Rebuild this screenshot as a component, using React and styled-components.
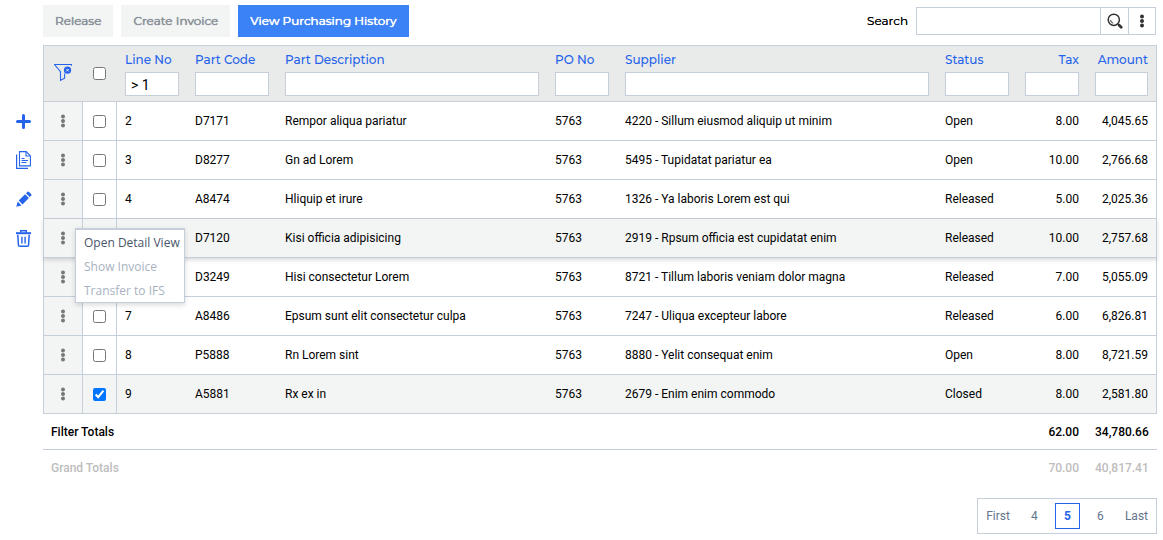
import React, { useState } from "react";
import styled, { createGlobalStyle } from "styled-components";

const line = "#c5cedb";
const blue = "#2563eb";
const shade = "#f3f5f4";
const heading = 'Montserrat, Inter, "Open Sans", sans-serif';

const GlobalStyle = createGlobalStyle`
  *, *::before, *::after { box-sizing: border-box; }
  body {
    margin: 0;
    background: #fff;
    color: #000;
    font-family: Roboto, "Liberation Sans", sans-serif;
    font-size: 12px;
    line-height: 16px;
  }
  button, input { font-family: inherit; }
`;

const Page = styled.main`
  display: grid;
  grid-template-columns: 43px minmax(0, 1fr);
  padding: 5px 6px 5px 0;
`;

const Toolbar = styled.div`
  grid-column: 2;
  display: flex;
  align-items: center;
  justify-content: space-between;
  gap: 24px;
  margin-bottom: 8px;
`;

const ButtonGroup = styled.div`
  display: flex;
  gap: 8px;
`;

const ToolButton = styled.button`
  height: 32px;
  padding: 0 12px;
  border: 0;
  background: ${(p) => (p.$primary ? "#3b82f6" : shade)};
  color: ${(p) => (p.$primary ? "#fff" : "#8b929b")};
  font: 400 12px/16px ${heading};
  text-shadow: 0 0 0 currentColor, 0 0 1px currentColor;
  white-space: nowrap;
`;

const SearchArea = styled.form`
  display: flex;
  align-items: center;
  gap: 8px;
  padding-right: 1px;
`;

const SearchLabel = styled.label`
  font: 400 12px/16px ${heading};
  text-shadow: 0 0 0 currentColor;
`;

const SearchBox = styled.div`
  display: flex;
  height: 28px;
  border: 1px solid ${line};
`;

const SearchInput = styled.input`
  width: 183px;
  padding: 0 8px;
  border: 0;
  background: #fff;
  outline: none;
`;

const SearchButton = styled.button`
  display: grid;
  place-items: center;
  width: 28px;
  padding: 0;
  border: 0;
  border-left: 1px solid ${line};
  background: #fff;
  color: #333;
  &:last-child { width: 27px; }
`;

const Rail = styled.nav`
  display: flex;
  flex-direction: column;
  padding: 57px 0 0 8px;
`;

const RailButton = styled.button`
  display: grid;
  place-items: center;
  width: 31px;
  height: 39px;
  padding: 0;
  border: 0;
  background: none;
  color: ${blue};
`;

const Content = styled.section`
  display: flex;
  flex-direction: column;
`;

const Table = styled.table`
  width: 100%;
  table-layout: fixed;
  border-collapse: separate;
  border-spacing: 0;
`;

const Col = styled.col`
  width: ${(p) => p.$width}px;
`;

const HeadCell = styled.th`
  height: 57px;
  padding: 0 8px;
  border: 0 solid ${line};
  border-width: 1px 0;
  background: #e9ebea;
  color: ${blue};
  text-align: ${(p) => (p.$right ? "right" : "left")};
  font-weight: 400;
  &:first-child { border-left-width: 1px; }
  &:last-child { border-right-width: 1px; }
`;

const ToolHeadCell = styled(HeadCell)`
  padding: 0 1px 0 0;
  text-align: center;
`;

const HeadLabel = styled.label`
  display: block;
  margin-bottom: 4px;
  font: 500 12px/16px ${heading};
  white-space: nowrap;
`;

const FilterInput = styled.input`
  display: block;
  width: 100%;
  height: 24px;
  padding: 2px 5px 0;
  border: 1px solid ${line};
  border-radius: 0;
  background: #fff;
  color: #000;
  font-size: 14px;
  outline: none;
`;

const IconButton = styled.button`
  display: grid;
  place-items: center;
  width: 100%;
  height: 32px;
  padding: 0;
  border: 0;
  background: none;
  color: ${(p) => p.$color};
`;

const Row = styled.tr`
  background: ${(p) => (p.$shaded ? shade : "#fff")};
  ${(p) =>
    p.$raised &&
    `
    position: relative;
    z-index: 1;
    box-shadow: 0 2px 4px rgba(0, 0, 0, 0.15);
  `}
`;

const Cell = styled.td`
  height: 39px;
  padding: 0 8px;
  border: 0 solid ${line};
  border-bottom-width: 1px;
  text-align: ${(p) => (p.$right ? "right" : "left")};
  white-space: nowrap;
  &:last-child { border-right-width: 1px; }
`;

const ActionCell = styled(Cell)`
  position: relative;
  padding: 0;
  border-width: 0 1px 1px;
  background: ${shade};
`;

const CheckCell = styled(Cell)`
  padding: 0;
  border-right-width: 1px;
  text-align: center;
`;

const Checkbox = styled.input`
  display: block;
  width: 13px;
  height: 13px;
  margin: 0 auto;
`;

const Menu = styled.div`
  position: absolute;
  z-index: 2;
  top: 9px;
  left: 31px;
  display: flex;
  flex-direction: column;
  width: 110px;
  border: 1px solid ${line};
  border-top-width: 2px;
  background: #fff;
  box-shadow: 0 2px 5px rgba(0, 0, 0, 0.15);
`;

const MenuItem = styled.button`
  height: 24px;
  padding: 2px 8px 0;
  border: 0;
  background: none;
  color: #475569;
  font: 12px/16px "Open Sans", "Noto Sans", sans-serif;
  text-align: left;
  white-space: nowrap;
  &:disabled { color: #a8b2bf; }
`;

const TotalCell = styled.td`
  height: 36px;
  padding: 0 8px;
  border-bottom: ${(p) => (p.$muted ? "0" : `1px solid ${line}`)};
  color: ${(p) => (p.$muted ? "#bdbdbd" : "#000")};
  font-weight: 500;
  text-align: ${(p) => (p.$right ? "right" : "left")};
  &:last-child { padding-right: 9px; }
`;

const Pager = styled.nav`
  display: flex;
  align-items: center;
  align-self: flex-end;
  gap: 4px;
  height: 36px;
  margin-top: 12px;
  border: 1px solid ${line};
`;

const PageNumbers = styled.div`
  display: flex;
  gap: 8px;
`;

const PageButton = styled.button`
  height: 26px;
  min-width: 25px;
  padding: 0 ${(p) => (p.$wide ? 8 : 0)}px;
  border: ${(p) => (p.$current ? `1px solid ${blue}` : "0")};
  background: none;
  color: ${(p) => (p.$current ? blue : "#64748b")};
  font-size: 12px;
  font-weight: ${(p) => (p.$current ? 700 : 400)};
`;

const Dots = ({ r = 2 }) => (
  <svg width="6" height="14" viewBox="0 0 6 14" fill="currentColor" aria-hidden="true">
    <circle cx="3" cy="2.5" r={r} />
    <circle cx="3" cy="7" r={r} />
    <circle cx="3" cy="11.5" r={r} />
  </svg>
);

const SearchIcon = () => (
  <svg width="16" height="16" viewBox="0 0 16 16" fill="none" stroke="currentColor" aria-hidden="true">
    <circle cx="6.8" cy="6.8" r="5.6" strokeWidth="1.5" />
    <path d="M3.6 7a3.4 3.4 0 0 0 2.6 3.2" strokeWidth="1" />
    <path d="M10.8 10.8l1.4 1.4" strokeWidth="1.4" />
    <path d="M12.2 12.2l2 2" strokeWidth="2.8" strokeLinecap="round" />
  </svg>
);

const FilterClearIcon = () => (
  <svg width="18" height="20" viewBox="0 0 18 20" fill="none" stroke="currentColor" aria-hidden="true">
    <path d="M17.5 1.8V.5H.5L6.5 7.6V16.3L10.6 14.2V9.6" strokeWidth="1.1" />
    <circle cx="13.5" cy="6.2" r="3.6" fill="currentColor" stroke="none" />
    <path d="M12.3 5l2.4 2.4M14.7 5l-2.4 2.4" stroke="#e9ebea" strokeWidth="1" />
  </svg>
);

const PlusIcon = () => (
  <svg width="15" height="15" viewBox="0 0 15 15" fill="none" stroke="currentColor" strokeWidth="3" strokeLinecap="round" aria-hidden="true">
    <path d="M7.5 1.5v12M1.5 7.5h12" />
  </svg>
);

const CopyIcon = () => (
  <svg width="15" height="19" viewBox="0 0 15 19" fill="none" stroke="currentColor" aria-hidden="true">
    <path d="M3.5 .6H10.2L14.4 4.9V14.9H3.5Z" strokeWidth="1.1" />
    <path d="M10 .8V5H14.4" strokeWidth="1.1" />
    <path d="M.6 3.4V17.4H12" strokeWidth="1.2" />
    <path d="M5.5 7.5H8.5M5.5 9.5H12M5.5 11.5H10.5" strokeWidth="1" />
  </svg>
);

const PencilIcon = () => (
  <svg width="16" height="17" viewBox="0 0 16 17" fill="currentColor" aria-hidden="true">
    <path d="M.3 15.8L1.7 10.6L5.5 14.4Z" />
    <path d="M2.7 9.6L9.1 3.2L12.9 7L6.5 13.4Z" />
    <path d="M10 2.3L11.6.7Q12.2.1 12.8.7L15.3 3.2Q15.9 3.8 15.3 4.4L13.8 6.1Z" />
  </svg>
);

const TrashIcon = () => (
  <svg width="15" height="17" viewBox="0 0 15 17" fill="none" stroke="currentColor" aria-hidden="true">
    <path d="M0 3.2H15" strokeWidth="2" />
    <path d="M4.7 2.6V.8H10.3V2.6" strokeWidth="1.4" />
    <path d="M1.8 4.8L2.4 15Q2.5 16.2 3.7 16.2H11.3Q12.5 16.2 12.6 15L13.2 4.8" strokeWidth="1.5" />
    <path d="M5.9 6.8V13.4M9.1 6.8V13.4" strokeWidth="1.4" />
  </svg>
);

const columns = [
  { key: "line", label: "Line No", width: 70 },
  { key: "code", label: "Part Code", width: 90 },
  { key: "description", label: "Part Description", width: 270 },
  { key: "po", label: "PO No", width: 70 },
  { key: "supplier", label: "Supplier", width: 320 },
  { key: "status", label: "Status", width: 80 },
  { key: "tax", label: "Tax", width: 70, right: true },
  { key: "amount", label: "Amount", width: 70, right: true },
];

const rows = [
  ["2", "D7171", "Rempor aliqua pariatur", "5763", "4220 - Sillum eiusmod aliquip ut minim", "Open", "8.00", "4,045.65"],
  ["3", "D8277", "Gn ad Lorem", "5763", "5495 - Tupidatat pariatur ea", "Open", "10.00", "2,766.68"],
  ["4", "A8474", "Hliquip et irure", "5763", "1326 - Ya laboris Lorem est qui", "Released", "5.00", "2,025.36"],
  ["5", "D7120", "Kisi officia adipisicing", "5763", "2919 - Rpsum officia est cupidatat enim", "Released", "10.00", "2,757.68"],
  ["6", "D3249", "Hisi consectetur Lorem", "5763", "8721 - Tillum laboris veniam dolor magna", "Released", "7.00", "5,055.09"],
  ["7", "A8486", "Epsum sunt elit consectetur culpa", "5763", "7247 - Uliqua excepteur labore", "Released", "6.00", "6,826.81"],
  ["8", "P5888", "Rn Lorem sint", "5763", "8880 - Yelit consequat enim", "Open", "8.00", "8,721.59"],
  ["9", "A5881", "Rx ex in", "5763", "2679 - Enim enim commodo", "Closed", "8.00", "2,581.80"],
];

const totals = [
  { label: "Filter Totals", tax: "62.00", amount: "34,780.66" },
  { label: "Grand Totals", tax: "70.00", amount: "40,817.41", muted: true },
];

const railActions = [
  { label: "Add", Icon: PlusIcon },
  { label: "Copy", Icon: CopyIcon },
  { label: "Edit", Icon: PencilIcon },
  { label: "Delete", Icon: TrashIcon },
];

export default function App() {
  const [selected, setSelected] = useState(["9"]);
  const menuRow = "5";

  const toggle = (id) =>
    setSelected((ids) => (ids.includes(id) ? ids.filter((i) => i !== id) : [...ids, id]));

  return (
    <>
      <GlobalStyle />
      <Page>
        <Toolbar>
          <ButtonGroup>
            <ToolButton type="button">Release</ToolButton>
            <ToolButton type="button">Create Invoice</ToolButton>
            <ToolButton type="button" $primary>View Purchasing History</ToolButton>
          </ButtonGroup>
          <SearchArea onSubmit={(e) => e.preventDefault()}>
            <SearchLabel htmlFor="search">Search</SearchLabel>
            <SearchBox>
              <SearchInput id="search" type="text" />
              <SearchButton type="submit" aria-label="Run search"><SearchIcon /></SearchButton>
              <SearchButton type="button" aria-label="Search options"><Dots /></SearchButton>
            </SearchBox>
          </SearchArea>
        </Toolbar>

        <Rail aria-label="Row actions">
          {railActions.map(({ label, Icon }) => (
            <RailButton key={label} type="button" aria-label={label}><Icon /></RailButton>
          ))}
        </Rail>

        <Content>
          <Table>
            <colgroup>
              <Col $width={40} />
              <Col $width={34} />
              {columns.map((c) => <Col key={c.key} $width={c.width} />)}
            </colgroup>
            <thead>
              <tr>
                <ToolHeadCell>
                  <IconButton type="button" aria-label="Clear filters" $color={blue}><FilterClearIcon /></IconButton>
                </ToolHeadCell>
                <ToolHeadCell>
                  <Checkbox
                    type="checkbox"
                    aria-label="Select all"
                    checked={selected.length === rows.length}
                    onChange={(e) => setSelected(e.target.checked ? rows.map((r) => r[0]) : [])}
                  />
                </ToolHeadCell>
                {columns.map((c) => (
                  <HeadCell key={c.key} $right={c.right}>
                    <HeadLabel htmlFor={`filter-${c.key}`}>{c.label}</HeadLabel>
                    <FilterInput
                      id={`filter-${c.key}`}
                      type="text"
                      defaultValue={c.key === "line" ? "> 1" : ""}
                    />
                  </HeadCell>
                ))}
              </tr>
            </thead>
            <tbody>
              {rows.map((r) => {
                const id = r[0];
                const open = id === menuRow;
                return (
                  <Row key={id} $shaded={open || selected.includes(id)} $raised={open}>
                    <ActionCell>
                      <IconButton type="button" aria-label={`Actions for line ${id}`} $color="#777">
                        <Dots />
                      </IconButton>
                      {open && (
                        <Menu role="menu">
                          <MenuItem type="button" role="menuitem">Open Detail View</MenuItem>
                          <MenuItem type="button" role="menuitem" disabled>Show Invoice</MenuItem>
                          <MenuItem type="button" role="menuitem" disabled>Transfer to IFS</MenuItem>
                        </Menu>
                      )}
                    </ActionCell>
                    <CheckCell>
                      <Checkbox
                        type="checkbox"
                        aria-label={`Select line ${id}`}
                        checked={selected.includes(id)}
                        onChange={() => toggle(id)}
                      />
                    </CheckCell>
                    {columns.map((c, i) => (
                      <Cell key={c.key} $right={c.right}>{r[i]}</Cell>
                    ))}
                  </Row>
                );
              })}
            </tbody>
            <tfoot>
              {totals.map((t) => (
                <tr key={t.label}>
                  <TotalCell colSpan={8} $muted={t.muted}>{t.label}</TotalCell>
                  <TotalCell $muted={t.muted} $right>{t.tax}</TotalCell>
                  <TotalCell $muted={t.muted} $right>{t.amount}</TotalCell>
                </tr>
              ))}
            </tfoot>
          </Table>

          <Pager aria-label="Pagination">
            <PageButton type="button" $wide>First</PageButton>
            <PageNumbers>
              <PageButton type="button">4</PageButton>
              <PageButton type="button" $current aria-current="page">5</PageButton>
              <PageButton type="button">6</PageButton>
            </PageNumbers>
            <PageButton type="button" $wide>Last</PageButton>
          </Pager>
        </Content>
      </Page>
    </>
  );
}
